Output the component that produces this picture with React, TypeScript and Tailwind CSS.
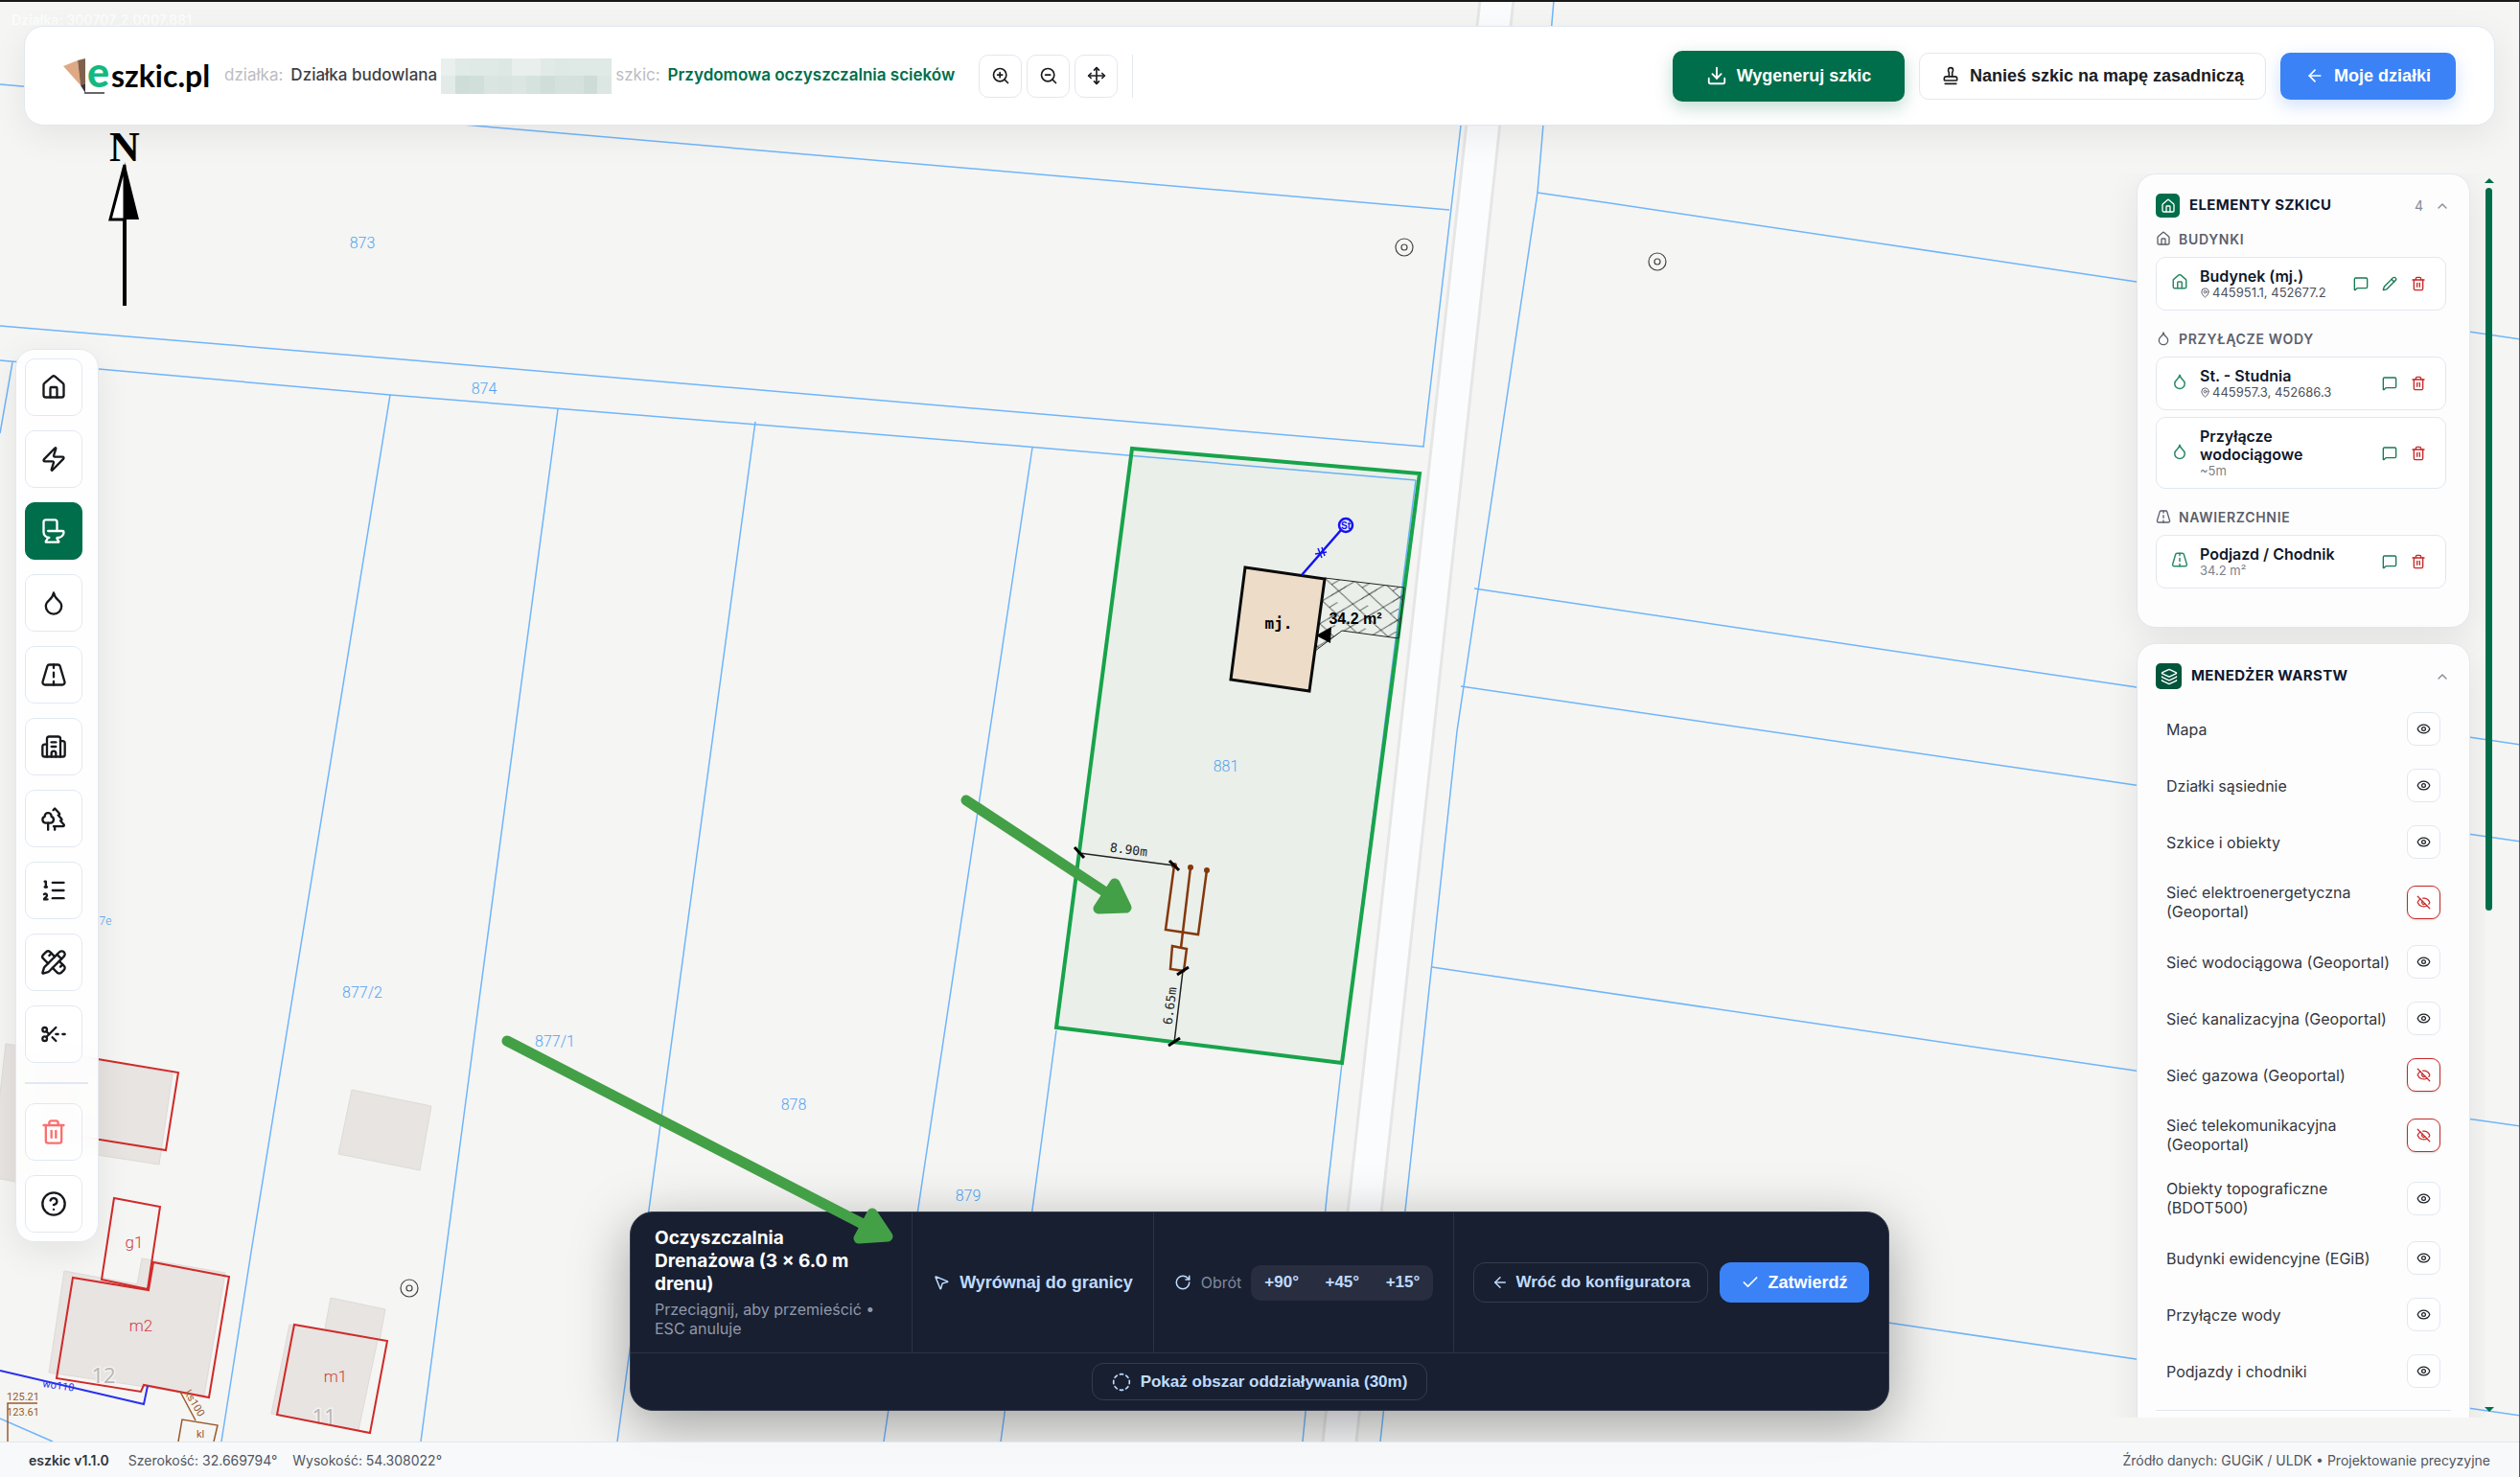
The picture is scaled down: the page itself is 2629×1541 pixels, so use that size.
import type { ReactNode } from "react"
import {
  ArrowLeft,
  Building2,
  Check,
  ChevronUp,
  CircleDashed,
  CircleHelp,
  Download,
  Droplet,
  Eye,
  EyeOff,
  House,
  Layers,
  ListOrdered,
  MapPin,
  MessageSquare,
  MousePointer2,
  Move,
  Pencil,
  PencilRuler,
  RotateCw,
  ScissorsLineDashed,
  Stamp,
  Toilet,
  Trash2,
  Trees,
  Zap,
  ZoomIn,
  ZoomOut,
} from "lucide-react"

type IconProps = { size?: number; strokeWidth?: number; className?: string }

function Road({ size = 24, strokeWidth = 2, className }: IconProps) {
  return (
    <svg
      width={size}
      height={size}
      viewBox="0 0 24 24"
      fill="none"
      stroke="currentColor"
      strokeWidth={strokeWidth}
      strokeLinecap="round"
      strokeLinejoin="round"
      className={className}
      aria-hidden="true"
    >
      <path d="M8.2 3h7.6a2 2 0 0 1 1.9 1.4l4.1 13.8A2.2 2.2 0 0 1 19.7 21H4.3a2.2 2.2 0 0 1-2.1-2.8L6.3 4.4A2 2 0 0 1 8.2 3z" />
      <path d="M12 3v3M12 10v4M12 18v3" />
    </svg>
  )
}

const tools = [
  { label: "Budynki", icon: House },
  { label: "Energia", icon: Zap },
  { label: "Kanalizacja", icon: Toilet, active: true },
  { label: "Woda", icon: Droplet },
  { label: "Nawierzchnie", icon: Road },
  { label: "Zabudowa", icon: Building2 },
  { label: "Zieleń", icon: Trees },
  { label: "Legenda", icon: ListOrdered },
  { label: "Wymiary", icon: PencilRuler },
  { label: "Podział", icon: ScissorsLineDashed },
]

const groups = [
  {
    name: "Budynki",
    icon: House,
    items: [{ name: "Budynek (mj.)", coords: "445951.1, 452677.2", editable: true }],
  },
  {
    name: "Przyłącze wody",
    icon: Droplet,
    items: [
      { name: "St. - Studnia", coords: "445957.3, 452686.3" },
      { name: "Przyłącze wodociągowe", note: "~5m" },
    ],
  },
  {
    name: "Nawierzchnie",
    icon: Road,
    items: [{ name: "Podjazd / Chodnik", note: "34.2 m²" }],
  },
] as {
  name: string
  icon: (p: IconProps) => ReactNode
  items: { name: string; coords?: string; note?: string; editable?: boolean }[]
}[]

const layers = [
  { name: "Mapa", visible: true },
  { name: "Działki sąsiednie", visible: true },
  { name: "Szkice i obiekty", visible: true },
  { name: "Sieć elektroenergetyczna (Geoportal)", visible: false, tall: true },
  { name: "Sieć wodociągowa (Geoportal)", visible: true },
  { name: "Sieć kanalizacyjna (Geoportal)", visible: true },
  { name: "Sieć gazowa (Geoportal)", visible: false },
  { name: "Sieć telekomunikacyjna (Geoportal)", visible: false, tall: true },
  { name: "Obiekty topograficzne (BDOT500)", visible: true, tall: true },
  { name: "Budynki ewidencyjne (EGiB)", visible: true },
  { name: "Przyłącze wody", visible: true },
  { name: "Podjazdy i chodniki", visible: true },
]

const boundaries = [
  "M0 88L506 132L1512 219",
  "M1621 0L1604 201L1520 763L1440 1504",
  "M1524 131L1488 440L1485 466",
  "M1400 1109L1385 1240L1359 1504",
  "M1604 201L1680 212L2229 294L2629 354",
  "M1538 614L2229 717L2629 777",
  "M1524 716L2200 815L2629 878",
  "M1494 1009L2200 1113L2629 1175",
  "M1454 1304L1970 1380L2629 1477",
  "M0 340L420 375L1180 440L1486 466",
  "M0 376L103 385L407 412L1060 465L1477 501",
  "M13 378L0 452",
  "M407 412L263 1300L231 1504",
  "M582 427L499 1050L439 1504",
  "M788 440L680 1240L644 1504",
  "M1077 467L1060 580L961 1240L922 1504",
  "M1102 1075L1080 1240L1044 1504",
  "M1477 501L1400 1109",
  "M0 1480L55 1504",
]

const parcelNumbers = [
  { n: "873", x: 378, y: 259 },
  { n: "874", x: 505, y: 411 },
  { n: "877/2", x: 378, y: 1041 },
  { n: "877/1", x: 579, y: 1092 },
  { n: "878", x: 828, y: 1158 },
  { n: "879", x: 1010, y: 1253 },
  { n: "881", x: 1279, y: 805 },
]

const posts = [
  [1465, 258],
  [1729, 273],
  [427, 1344],
]

function MapCanvas() {
  return (
    <svg className="absolute inset-0 h-full w-full" role="img" aria-label="Mapa działki 881">
      <defs>
        <pattern id="paving" width="32" height="24" patternUnits="userSpaceOnUse" patternTransform="translate(1382 603) rotate(6)">
          <path d="M0 0L32 24M0 24L32 0M-8 6L8 -6M8 6L20 -3M8 18L24 6M24 30L40 18" fill="none" stroke="#3f4a45" strokeWidth="1" />
        </pattern>
      </defs>

      {/* Road */}
      <path d="M1544 0H1579L1415 1504H1380Z" fill="#fbfcfe" />
      <path d="M1544 0L1380 1504M1579 0L1415 1504" stroke="#e6e6e6" strokeWidth="3" fill="none" />

      {/* Building footprints */}
      <g fill="#e8e4e1" stroke="#dfdad8" strokeWidth="1">
        <path d="M6 1089L60 1098L44 1238L-10 1228Z" />
        <path d="M60 1098L180 1120L166 1215L44 1196Z" />
        <path d="M367 1137L450 1154L438 1221L353 1204Z" />
        <path d="M67 1326L143 1340L148 1313L235 1328L213 1456L51 1432Z" />
        <path d="M345 1354L402 1366L396 1398L339 1386Z" />
        <path d="M302 1382L394 1398L374 1492L283 1475Z" />
      </g>
      <g fill="#b9b7b6" stroke="#f4f3f2" strokeWidth="3" paintOrder="stroke" fontFamily="Noto Sans, sans-serif" fontSize="22" textAnchor="middle">
        <text x="108" y="1443">12</text>
        <text x="338" y="1486">11</text>
      </g>

      <g fill="none" stroke="#6fb5fb" strokeWidth="1.5">
        {boundaries.map((d) => (
          <path key={d} d={d} />
        ))}
      </g>

      <g fill="none" stroke="#cf2a2a" strokeWidth="2">
        <path d="M60 1098L186 1119L173 1200L60 1182Z" />
        <path d="M119 1250L167 1259L154 1345L106 1335Z" />
        <path d="M76 1333L155 1346L160 1317L239 1332L218 1458L150 1445L147 1452L59 1438Z" />
        <path d="M307 1382L404 1399L386 1495L289 1476Z" />
      </g>
      <g fill="#d23a3a" fontFamily="Roboto, sans-serif" fontWeight="300" fontSize="17" textAnchor="middle">
        <text x="140" y="1302">g1</text>
        <text x="147" y="1389">m2</text>
        <text x="350" y="1442">m1</text>
      </g>

      {/* Utility networks */}
      <path d="M0 1430L150 1465L154 1446" fill="none" stroke="#2a2ff0" strokeWidth="2" />
      <text x="44" y="1447" fill="#2a2ff0" fontFamily="Roboto, sans-serif" fontSize="11" transform="rotate(8 44 1447)">wo110</text>
      <g fill="none" stroke="#9a5a2e" strokeWidth="1.5">
        <path d="M39 1464H8V1504" />
        <path d="M188 1452L204 1482" />
        <path d="M186 1504L190 1481L227 1487L223 1504" />
      </g>
      <g fill="#9a5a2e" fontFamily="Roboto, sans-serif" fontSize="11" textAnchor="middle">
        <text x="24" y="1461">125.21</text>
        <text x="24" y="1477">123.61</text>
        <text x="209" y="1500">kl</text>
        <text x="200" y="1466" transform="rotate(58 200 1466)">ks100</text>
      </g>

      <g fill="none" stroke="#444" strokeWidth="1.2">
        {posts.map(([x, y]) => (
          <g key={x}>
            <circle cx={x} cy={y} r="9" />
            <circle cx={x} cy={y} r="3" />
          </g>
        ))}
      </g>

      {/* Own parcel */}
      <path d="M1181 468L1481 494L1400 1109L1102 1072Z" fill="#1f8f4a" fillOpacity="0.05" stroke="#18a34b" strokeWidth="4" />

      <g fill="#4fa3f3" fontFamily="Roboto, sans-serif" fontWeight="300" fontSize="16" textAnchor="middle">
        {parcelNumbers.map(({ n, x, y }) => (
          <text key={n} x={x} y={y}>
            {n}
          </text>
        ))}
        <text x="110" y="965" fontSize="12">
          7e
        </text>
      </g>

      {/* Driveway */}
      <path d="M1382 603L1465 613L1459 666L1400 658L1372 679Z" fill="url(#paving)" stroke="#222" strokeWidth="1" />
      <path d="M1299 592L1382 604L1366 721L1284 709Z" fill="#ecdcc8" stroke="#0a0a0a" strokeWidth="3" />
      <path d="M1373 663L1389 654L1388 671Z" fill="#000" />
      <text x="1334" y="656" fontFamily="DejaVu Sans Mono, monospace" fontWeight="700" fontSize="16" textAnchor="middle">mj.</text>
      <text x="1414" y="651" fontFamily="Liberation Sans, sans-serif" fontWeight="700" fontSize="16" textAnchor="middle">34.2 m²</text>

      {/* Well and water connection */}
      <g fill="none" stroke="#1212f5" strokeWidth="2.5">
        <circle cx="1404" cy="548" r="7" />
        <path d="M1399 553L1358 600" />
        <path d="M1372 578L1384 576M1375 572L1379 582M1379 571L1382 580" strokeWidth="1.5" />
      </g>
      <text x="1404" y="552" fill="#1212f5" fontFamily="Liberation Sans, sans-serif" fontWeight="700" fontSize="10" textAnchor="middle">St</text>

      {/* Drain field */}
      <g fill="none" stroke="#85380c" strokeWidth="2.5">
        <path d="M1225 903L1216 970L1250 975L1259 908" />
        <path d="M1242 905L1232 989" />
        <path d="M1223 987L1238 990L1235 1013L1221 1011Z" />
      </g>
      <g fill="#85380c">
        <circle cx="1225" cy="903" r="3" />
        <circle cx="1242" cy="905" r="3" />
        <circle cx="1259" cy="908" r="3" />
      </g>

      {/* Dimensions */}
      <path d="M1126 890L1225 903M1234 1013L1225 1088" stroke="#222" strokeWidth="1.5" />
      <path d="M1121 884L1131 895M1220 898L1230 908M1228 1017L1240 1009M1219 1091L1231 1083" stroke="#000" strokeWidth="3" />
      <g fill="#222" fontFamily="DejaVu Sans Mono, monospace" fontSize="13" textAnchor="middle">
        <text x="1177" y="891" transform="rotate(7 1177 891)">8.90m</text>
        <text x="1225" y="1050" transform="rotate(-83 1225 1050)">6.65m</text>
      </g>

      {/* North arrow */}
      <text x="130" y="168" fontFamily="Liberation Serif, serif" fontWeight="700" fontSize="44" textAnchor="middle">N</text>
      <path d="M130 172L115 229H130Z" fill="#fff" stroke="#000" strokeWidth="3" />
      <path d="M130 169L145 229H130Z" />
      <path d="M130 228V319" stroke="#000" strokeWidth="4" />

      <text x="12" y="26" fill="#fff" fillOpacity="0.8" fontFamily="Inter, sans-serif" fontWeight="600" fontSize="14">Działka: 300707_2.0007.881</text>
    </svg>
  )
}

/* Guide arrows lie over the map and the placement bar */
function GuideArrows() {
  return (
    <svg className="pointer-events-none absolute inset-0 z-20 h-full w-full" aria-hidden="true">
      <g stroke="#43a047" fill="#43a047" strokeLinecap="round" strokeLinejoin="round">
        <path d="M1008 835L1152 930" strokeWidth="11" fill="none" />
        <path d="M1163 922L1175 947L1146 948Z" strokeWidth="11" />
        <path d="M529 1086L898 1276" strokeWidth="11" fill="none" />
        <path d="M910 1266L926 1290L896 1292Z" strokeWidth="11" />
      </g>
    </svg>
  )
}

function Logo() {
  return (
    <svg width="156" height="60" viewBox="0 -8 156 60" role="img" aria-label="eszkic.pl">
      <path d="M1 12L16 6L19 32Z" fill="#dfa985" />
      <path d="M16 6L24 4V30L19 32Z" fill="#80604c" />
      <path d="M19 32L24 30V40Z" fill="#3a3434" />
      <path d="M23 40H44" stroke="#666" strokeWidth="2" />
      <text x="26" y="34" fill="#13b981" fontFamily="Lato, sans-serif" fontWeight="900" fontSize="43">e</text>
      <text x="51" y="34" fill="#050505" fontFamily="Lato, sans-serif" fontWeight="700" fontSize="32">szkic.pl</text>
    </svg>
  )
}

const mosaic = [
  "bg-[#e9f0ee]",
  "bg-[#e0eae7]",
  "bg-[#dfe9e6]",
  "bg-[#dfe9e6]",
  "bg-[#dde8e4]",
  "bg-[#e8efed]",
  "bg-[#e8efed]",
  "bg-[#e2eae8]",
  "bg-[#dee8e4]",
  "bg-[#dfe9e6]",
  "bg-[#dfe9e6]",
  "bg-[#dfe9e6]",
  "bg-[#e2ebe8]",
  "bg-[#cfddd8]",
  "bg-[#d1dfda]",
  "bg-[#dae5e1]",
  "bg-[#d8e4e0]",
  "bg-[#dbe5e2]",
  "bg-[#d5e2de]",
  "bg-[#d0deda]",
  "bg-[#d4e1dc]",
  "bg-[#d4e1dc]",
  "bg-[#cedcd7]",
  "bg-[#dce7e3]",
]

function Header() {
  return (
    <header className="z-10 mx-[25px] mt-[25px] flex h-[104px] items-center rounded-[20px] border border-slate-200 bg-white pr-10 pl-[39px] text-[17px] shadow-[0_10px_36px_rgba(0,0,0,0.07)]">
      <a href="#" className="mr-[13px] shrink-0">
        <Logo />
      </a>
      <div className="flex items-center whitespace-nowrap">
        <span className="mr-2 text-[#bcbcc2]">działka:</span>
        <span className="font-medium text-[#3f3f46]">Działka budowlana</span>
        <span className="mx-1 grid h-[37px] w-[178px] grid-cols-12" aria-hidden="true">
          {mosaic.map((c, i) => (
            <span key={i} className={c} />
          ))}
        </span>
        <span className="mr-2 text-[#bcbcc2]">szkic:</span>
        <span className="font-semibold text-[#006e4a]">Przydomowa oczyszczalnia scieków</span>
      </div>
      <div className="ml-[25px] flex items-center gap-[5px] border-r border-slate-200 pr-[15px]">
        {[
          { label: "Przybliż", icon: ZoomIn },
          { label: "Oddal", icon: ZoomOut },
          { label: "Przesuń", icon: Move },
        ].map(({ label, icon: Icon }) => (
          <button key={label} aria-label={label} className="flex size-[45px] items-center justify-center rounded-[10px] border border-slate-200 text-[#1c1c1f]">
            <Icon size={20} />
          </button>
        ))}
      </div>
      <div className="ml-auto flex items-center gap-[15px] font-['Liberation_Sans',sans-serif] font-bold whitespace-nowrap">
        <button className="flex h-[53px] w-[242px] items-center justify-center gap-2.5 rounded-[10px] bg-[#006e4a] text-[18px] text-white shadow-[0_6px_18px_rgba(0,110,74,0.25)]">
          <Download size={22} />
          Wygeneruj szkic
        </button>
        <button className="flex h-[49px] w-[362px] items-center justify-center gap-2.5 rounded-[10px] border border-slate-200 text-[18px] text-[#1c1c1f]">
          <Stamp size={20} />
          Nanieś szkic na mapę zasadniczą
        </button>
        <button className="flex h-[49px] w-[183px] items-center justify-center gap-2.5 rounded-[10px] bg-[#3b82f6] text-[18px] text-white shadow-[0_6px_18px_rgba(59,130,246,0.25)]">
          <ArrowLeft size={20} />
          Moje działki
        </button>
      </div>
    </header>
  )
}

function Toolbox() {
  const cell = "flex size-[60px] items-center justify-center rounded-[10px] border"
  return (
    <nav className="mt-[183px] ml-4 flex h-fit w-[87px] flex-col gap-[15px] self-start rounded-[20px] border border-slate-200 bg-white/90 px-[9px] py-[9px] shadow-[0_10px_36px_rgba(0,0,0,0.08)] backdrop-blur-md">
      {tools.map(({ label, icon: Icon, active }) => (
        <button key={label} aria-label={label} className={`${cell} ${active ? "border-[#006e4a] bg-[#006e4a] text-white" : "border-slate-200 bg-white/60 text-[#16181b]"}`}>
          <Icon size={28} />
        </button>
      ))}
      <hr className="my-[5px] w-[66px] border-t-2 border-slate-200" />
      <button aria-label="Usuń" className={`${cell} border-slate-200 bg-white/40 text-[#fb6f6f]`}>
        <Trash2 size={28} />
      </button>
      <button aria-label="Pomoc" className={`${cell} border-slate-200 bg-white/60 text-[#16181b]`}>
        <CircleHelp size={28} />
      </button>
    </nav>
  )
}

function PlacementBar() {
  return (
    <section className="mb-8 w-[1314px] self-end overflow-hidden rounded-[24px] border border-[#343b4d] bg-[#181f31] shadow-[0_16px_60px_rgba(0,0,0,0.35)]">
      <div className="flex h-[147px] divide-x divide-[#2c3346] border-b border-[#2c3346] font-['Liberation_Sans',sans-serif] text-[17px] font-bold whitespace-nowrap text-[#bfdbfe]">
        <div className="flex w-[294px] flex-col justify-center pl-[25px] font-['Inter',sans-serif] whitespace-normal">
          <h2 className="w-[220px] text-[19px] leading-6 font-bold text-white">Oczyszczalnia Drenażowa (3 × 6.0 m drenu)</h2>
          <p className="mt-1 w-[244px] text-[16px] leading-5 font-normal text-[#8f99ab]">Przeciągnij, aby przemieścić • ESC anuluje</p>
        </div>
        <button className="flex w-[252px] items-center justify-center gap-2.5 text-[18px]">
          <MousePointer2 size={18} />
          Wyrównaj do granicy
        </button>
        <div className="flex flex-1 items-center justify-center gap-2.5">
          <RotateCw size={18} className="shrink-0" />
          <span className="font-['Inter',sans-serif] text-[16px] font-normal text-[#7f899b]">Obrót</span>
          <div className="flex h-[37px] w-[190px] items-center justify-between rounded-[10px] bg-[#282d3f] px-3.5">
            <button>+90°</button>
            <button>+45°</button>
            <button>+15°</button>
          </div>
        </div>
        <div className="flex w-[453px] items-center justify-center gap-3">
          <button className="flex h-[42px] w-[245px] items-center justify-center gap-2 rounded-[12px] border border-[#343b4d]">
            <ArrowLeft size={18} />
            Wróć do konfiguratora
          </button>
          <button className="flex h-[42px] w-[156px] items-center justify-center gap-2 rounded-[12px] bg-[#3b82f6] text-[18px] text-white">
            <Check size={20} />
            Zatwierdź
          </button>
        </div>
      </div>
      <div className="flex h-[59px] items-center justify-center">
        <button className="flex h-[39px] w-[350px] items-center justify-center gap-2.5 rounded-[12px] border border-[#343b4d] font-['Liberation_Sans',sans-serif] text-[17px] font-bold text-[#bfdbfe]">
          <CircleDashed size={20} />
          Pokaż obszar oddziaływania (30m)
        </button>
      </div>
    </section>
  )
}

function ElementsPanel() {
  return (
    <section className="h-[474px] shrink-0 rounded-[20px] border border-slate-200 bg-[#fdfdfd] px-[19px] pt-5 shadow-[0_10px_36px_rgba(0,0,0,0.08)]">
      <div className="flex items-center">
        <span className="flex size-[25px] items-center justify-center rounded-[5px] bg-[#006e4a] text-white">
          <House size={16} />
        </span>
        <h2 className="ml-2.5 text-[15px] font-bold tracking-wide text-[#101830]">ELEMENTY SZKICU</h2>
        <span className="ml-auto text-[14px] text-[#858a94]">4</span>
        <button aria-label="Zwiń elementy" className="mr-px ml-3 text-[#858a94]">
          <ChevronUp size={16} />
        </button>
      </div>
      {groups.map(({ name, icon: Icon, items }, g) => (
        <div key={name} className={g === 0 ? "mt-3" : "mt-[19px]"}>
          <h3 className="flex h-5 items-center gap-2 text-[14px] font-semibold tracking-wider text-[#5b606c] uppercase">
            <Icon size={16} />
            {name}
          </h3>
          <ul className="mt-[9px] flex w-[303px] flex-col gap-[7px]">
            {items.map(({ name: title, coords, note, editable }) => (
              <li key={title} className="flex items-center rounded-[10px] border border-slate-200 bg-white py-2.5 pr-5 pl-[15px]">
                <Icon size={18} className="mb-1 shrink-0 text-[#2a8a66]" />
                <div className="ml-3 w-[150px]">
                  <div className="text-[16px] leading-[19px] font-semibold text-[#0f172a]">
                    {title}
                  </div>
                  {coords ? (
                    <div className="flex items-center gap-0.5 text-[13px] leading-[15px] whitespace-nowrap text-[#4b505b]">
                      <MapPin size={11} />
                      {coords}
                    </div>
                  ) : (
                    <div className="text-[13px] leading-[15px] text-[#7b808a]">{note}</div>
                  )}
                </div>
                <div className="ml-auto flex items-center gap-3.5 text-[#147a53]">
                  <button aria-label={`Komentarz: ${title}`}>
                    <MessageSquare size={16} />
                  </button>
                  {editable && (
                    <button aria-label={`Edytuj: ${title}`}>
                      <Pencil size={16} />
                    </button>
                  )}
                  <button aria-label={`Usuń: ${title}`} className="text-[#c62828]">
                    <Trash2 size={16} />
                  </button>
                </div>
              </li>
            ))}
          </ul>
        </div>
      ))}
    </section>
  )
}

function LayersPanel() {
  return (
    <section className="shrink-0 rounded-[20px] border border-slate-200 bg-[#fdfdfd] px-[19px] pt-5 pb-10 shadow-[0_10px_36px_rgba(0,0,0,0.08)]">
      <div className="mb-3 flex items-center">
        <span className="flex size-[27px] items-center justify-center rounded-[5px] bg-[#00553a] text-white">
          <Layers size={18} />
        </span>
        <h2 className="ml-2.5 text-[15px] font-bold tracking-wide text-[#101830]">MENEDŻER WARSTW</h2>
        <button aria-label="Zwiń warstwy" className="mr-px ml-auto text-[#858a94]">
          <ChevronUp size={16} />
        </button>
      </div>
      <ul>
        {layers.map(({ name, visible, tall }) => (
          <li key={name} className={`flex items-center justify-between pr-[11px] pl-[11px] ${tall ? "h-[66px]" : "h-[59px]"}`}>
            <span className={`text-[16px] leading-5 text-[#33373f] ${tall ? "w-[200px]" : "whitespace-nowrap"}`}>{name}</span>
            <button
              aria-label={`Widoczność: ${name}`}
              className={`flex size-[35px] shrink-0 items-center justify-center rounded-[9px] border bg-white ${visible ? "border-slate-200 text-[#1c1f24]" : "border-[#c62828] text-[#c62828] shadow-sm"}`}
            >
              {visible ? <Eye size={15} /> : <EyeOff size={15} />}
            </button>
          </li>
        ))}
      </ul>
      <hr className="mt-[11px] w-[308px] border-slate-200" />
    </section>
  )
}

export default function App() {
  return (
    <div className="relative flex h-screen flex-col overflow-hidden border-t-2 border-r border-t-[#1a1a1a] border-r-[#55585c] bg-[#f5f5f3] font-['Inter',sans-serif]">
      <div className="absolute inset-x-0 -top-0.5 bottom-0">
        <MapCanvas />
      </div>
      <Header />
      <main className="relative grid min-h-0 flex-1 grid-cols-[1fr_auto_1fr] pt-[50px]">
        <Toolbox />
        <PlacementBar />
        <div className="mr-7 mb-[25px] flex min-h-0 justify-end gap-4">
          <div className="-mr-4 flex min-h-0 w-[404px] flex-col gap-4 overflow-hidden pr-4 pl-10">
            <ElementsPanel />
            <LayersPanel />
          </div>
          <div className="flex w-[7px] flex-col items-center pt-[5px] pb-1.5" aria-hidden="true">
            <svg width="10" height="5" className="shrink-0 overflow-visible" fill="#006e4a">
              <path d="M0 5L5 0L10 5Z" />
            </svg>
            <span className="mt-[5px] h-[754px] w-[7px] rounded-full bg-[#006e4a]" />
            <svg width="10" height="5" className="mt-auto shrink-0" fill="#006e4a">
              <path d="M0 0L5 5L10 0Z" />
            </svg>
          </div>
        </div>
      </main>
      <footer className="z-10 flex h-[37px] items-center border-t border-slate-200 bg-[#f8fafc]/90 pr-[30px] pl-[30px] text-[14px] text-[#52565e]">
        <span className="mr-5 font-semibold text-[#2f343d]">eszkic v1.1.0</span>
        <span className="mr-4">Szerokość: 32.669794°</span>
        <span>Wysokość: 54.308022°</span>
        <span className="ml-auto">Źródło danych: GUGiK / ULDK • Projektowanie precyzyjne</span>
      </footer>
      <div className="pointer-events-none absolute inset-x-0 -top-0.5 bottom-0 z-20">
        <GuideArrows />
      </div>
    </div>
  )
}
